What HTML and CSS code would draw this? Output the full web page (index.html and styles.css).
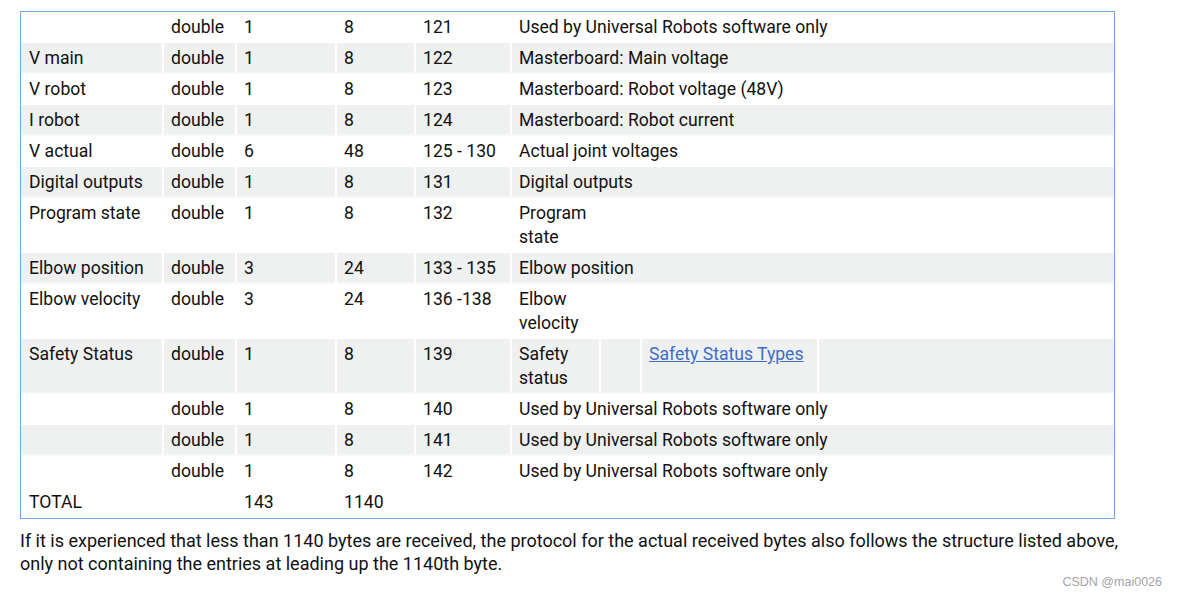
FILE: index.html
```html
<!DOCTYPE html>
<html>
<head>
<meta charset="utf-8">
<link rel="stylesheet" href="styles.css">
</head>
<body>
<div class="page">
<table class="data">
<colgroup>
<col class="c1"><col class="c2"><col class="c3"><col class="c4"><col class="c5"><col class="c6"><col class="c7"><col class="c8"><col class="c9">
</colgroup>
<tbody>
<tr><td></td><td>double</td><td>1</td><td>8</td><td>121</td><td colspan="4">Used by Universal Robots software only</td></tr>
<tr class="alt"><td>V main</td><td>double</td><td>1</td><td>8</td><td>122</td><td colspan="4">Masterboard: Main voltage</td></tr>
<tr><td>V robot</td><td>double</td><td>1</td><td>8</td><td>123</td><td colspan="4">Masterboard: Robot voltage (48V)</td></tr>
<tr class="alt"><td>I robot</td><td>double</td><td>1</td><td>8</td><td>124</td><td colspan="4">Masterboard: Robot current</td></tr>
<tr><td>V actual</td><td>double</td><td>6</td><td>48</td><td>125 - 130</td><td colspan="4">Actual joint voltages</td></tr>
<tr class="alt"><td>Digital outputs</td><td>double</td><td>1</td><td>8</td><td>131</td><td colspan="4">Digital outputs</td></tr>
<tr><td>Program state</td><td>double</td><td>1</td><td>8</td><td>132</td><td>Program state</td><td></td><td></td><td></td></tr>
<tr class="alt"><td>Elbow position</td><td>double</td><td>3</td><td>24</td><td>133 - 135</td><td colspan="4">Elbow position</td></tr>
<tr><td>Elbow velocity</td><td>double</td><td>3</td><td>24</td><td>136 -138</td><td>Elbow velocity</td><td></td><td></td><td></td></tr>
<tr class="alt"><td>Safety Status</td><td>double</td><td>1</td><td>8</td><td>139</td><td>Safety status</td><td></td><td><a class="link" href="#">Safety Status Types</a></td><td></td></tr>
<tr><td></td><td>double</td><td>1</td><td>8</td><td>140</td><td colspan="4">Used by Universal Robots software only</td></tr>
<tr class="alt"><td></td><td>double</td><td>1</td><td>8</td><td>141</td><td colspan="4">Used by Universal Robots software only</td></tr>
<tr><td></td><td>double</td><td>1</td><td>8</td><td>142</td><td colspan="4">Used by Universal Robots software only</td></tr>
<tr class="total"><td>TOTAL</td><td></td><td>143</td><td>1140</td><td></td><td colspan="4"></td></tr>
</tbody>
</table>
<p class="note">If it is experienced that less than 1140 bytes are received, the protocol for the actual received bytes also follows the structure listed above, only not containing the entries at leading up the 1140th byte.</p>
</div>
<div class="watermark">CSDN @mai0026</div>
</body>
</html>
```

FILE: styles.css
```css
* { box-sizing: border-box; }
html, body { margin: 0; padding: 0; background: #fff; }
body {
  font-family: Roboto, "Liberation Sans", sans-serif;
  color: #111;
  position: relative;
  width: 1178px;
  height: 596px;
  overflow: hidden;
}
.page { padding: 11px 0 0 20px; }
.data {
  width: 1095px;
  table-layout: fixed;
  border-collapse: separate;
  border-spacing: 0;
  border: 1px solid #6ea6e2;
  font-size: 17.6px;
  line-height: 24px;
}
.c1 { width: 141px; }
.c2 { width: 73px; }
.c3 { width: 100px; }
.c4 { width: 79px; }
.c5 { width: 96px; }
.c6 { width: 89px; }
.c7 { width: 41px; }
.c8 { width: 177px; }
.c9 { width: 297px; }
.data td {
  padding: 3px 6px 2px 7px;
  border-left: 2px solid #fff;
  border-bottom: 2px solid #fff;
  vertical-align: top;
  text-align: left;
}
.data td:first-child { border-left: none; padding-left: 8px; }
.data tr.alt td { background: #eff0f0; border-bottom-color: #f6f7f7; }
.link { color: #3c6ec6; text-decoration: underline; }
.note {
  margin: 10px 0 0 0;
  width: 1100px;
  font-size: 18px;
  line-height: 23px;
}
.watermark {
  position: absolute;
  right: 16px;
  bottom: 7px;
  font-family: "Liberation Sans", Arial, sans-serif;
  font-size: 12.5px;
  color: #a3a3a3;
}
```
